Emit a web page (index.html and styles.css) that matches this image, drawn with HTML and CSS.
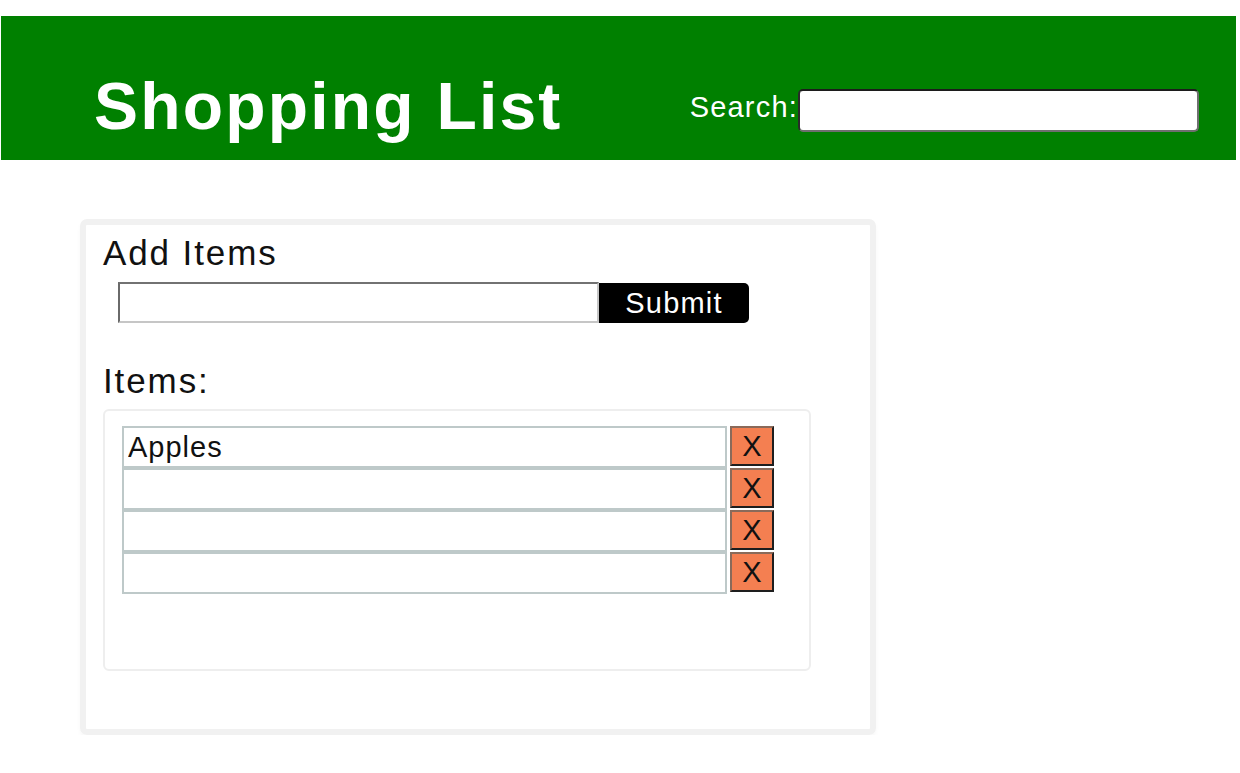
FILE: index.html
```html
<!DOCTYPE html>
<html lang="en">
<head>
<meta charset="utf-8">
<title>Shopping List</title>
<link rel="stylesheet" href="styles.css">
</head>
<body>
<header class="topbar">
  <h1 class="title">Shopping List</h1>
  <div class="search">
    <label class="search-label" for="search">Search:</label>
    <input class="search-input" id="search" type="text">
  </div>
</header>
<main class="card">
  <h2 class="section-title">Add Items</h2>
  <form class="add-row">
    <input class="add-input" type="text">
    <button class="submit-btn" type="button">Submit</button>
  </form>
  <h2 class="section-title items-title">Items:</h2>
  <div class="list-box">
    <div class="item-row">
      <input class="item-input" type="text" value="Apples">
      <button class="remove-btn" type="button">X</button>
    </div>
    <div class="item-row">
      <input class="item-input" type="text" value="">
      <button class="remove-btn" type="button">X</button>
    </div>
    <div class="item-row">
      <input class="item-input" type="text" value="">
      <button class="remove-btn" type="button">X</button>
    </div>
    <div class="item-row">
      <input class="item-input" type="text" value="">
      <button class="remove-btn" type="button">X</button>
    </div>
  </div>
</main>
</body>
</html>
```
FILE: styles.css
```css
* {
  box-sizing: border-box;
}

html, body {
  margin: 0;
  padding: 0;
  background: #ffffff;
}

body {
  font-family: "Liberation Sans", Arial, sans-serif;
  color: #111111;
}

.topbar {
  display: flex;
  align-items: flex-end;
  height: 144px;
  margin: 16px 4px 0 1px;
  padding-left: 93px;
  background: #008000;
}

.title {
  margin: 0 0 21px 0;
  font-size: 66px;
  font-weight: bold;
  line-height: 1;
  color: #ffffff;
  letter-spacing: 2.2px;
}

.search {
  display: flex;
  align-items: center;
  margin: 0 37px 28px auto;
}

.search-label {
  font-size: 29px;
  line-height: 33px;
  color: #ffffff;
  margin-bottom: 7px;
  letter-spacing: 1.2px;
}

.search-input {
  width: 401px;
  height: 43px;
  border: 2px solid;
  border-color: #1c1c1c #6f6f6f #6f6f6f #2a2a2a;
  border-radius: 5px;
  background: #ffffff;
  font: 29px "Liberation Sans", Arial, sans-serif;
  padding: 0 6px;
}

.card {
  width: 796px;
  margin: 59px 0 0 80px;
  padding: 8px 17px 58px 17px;
  border: 6px solid #f1f1f1;
  border-radius: 7px;
  box-shadow: 0 3px 4px rgba(0, 0, 0, 0.03);
}

.section-title {
  margin: 0;
  font-size: 35px;
  font-weight: normal;
  line-height: 40px;
  color: #111111;
  letter-spacing: 1.9px;
}

.add-row {
  display: flex;
  margin: 9px 0 0 15px;
}

.add-input {
  width: 481px;
  height: 41px;
  border: 2px solid;
  border-color: #727272 #c6c6c6 #c6c6c6 #6a6a6a;
  background: #ffffff;
  font: 29px "Liberation Sans", Arial, sans-serif;
  padding: 0 4px;
}

.submit-btn {
  width: 150px;
  height: 40px;
  margin-top: 1px;
  border: none;
  border-radius: 0 5px 5px 0;
  background: #000000;
  color: #ffffff;
  font: 29px "Liberation Sans", Arial, sans-serif;
  letter-spacing: 1.2px;
  padding: 0;
}

.items-title {
  margin-top: 38px;
}

.list-box {
  width: 708px;
  height: 262px;
  margin-top: 8px;
  padding: 15px 0 0 17px;
  border: 2px solid #eeeeee;
  border-radius: 6px;
}

.item-row {
  display: flex;
  align-items: flex-start;
}

.item-input {
  width: 605px;
  height: 42px;
  border: 2px solid #bec9c9;
  background: #ffffff;
  color: #111111;
  font: 29px "Liberation Sans", Arial, sans-serif;
  letter-spacing: 1px;
  padding: 0 4px;
}

.remove-btn {
  width: 44px;
  height: 40px;
  margin-left: 3px;
  padding: 0;
  border: 2px solid;
  border-color: #8a6a5a #1e1e1e #1e1e1e #8a6a5a;
  background: #f47f51;
  color: #111111;
  font: 29px "Liberation Sans", Arial, sans-serif;
  line-height: 1;
}
```
